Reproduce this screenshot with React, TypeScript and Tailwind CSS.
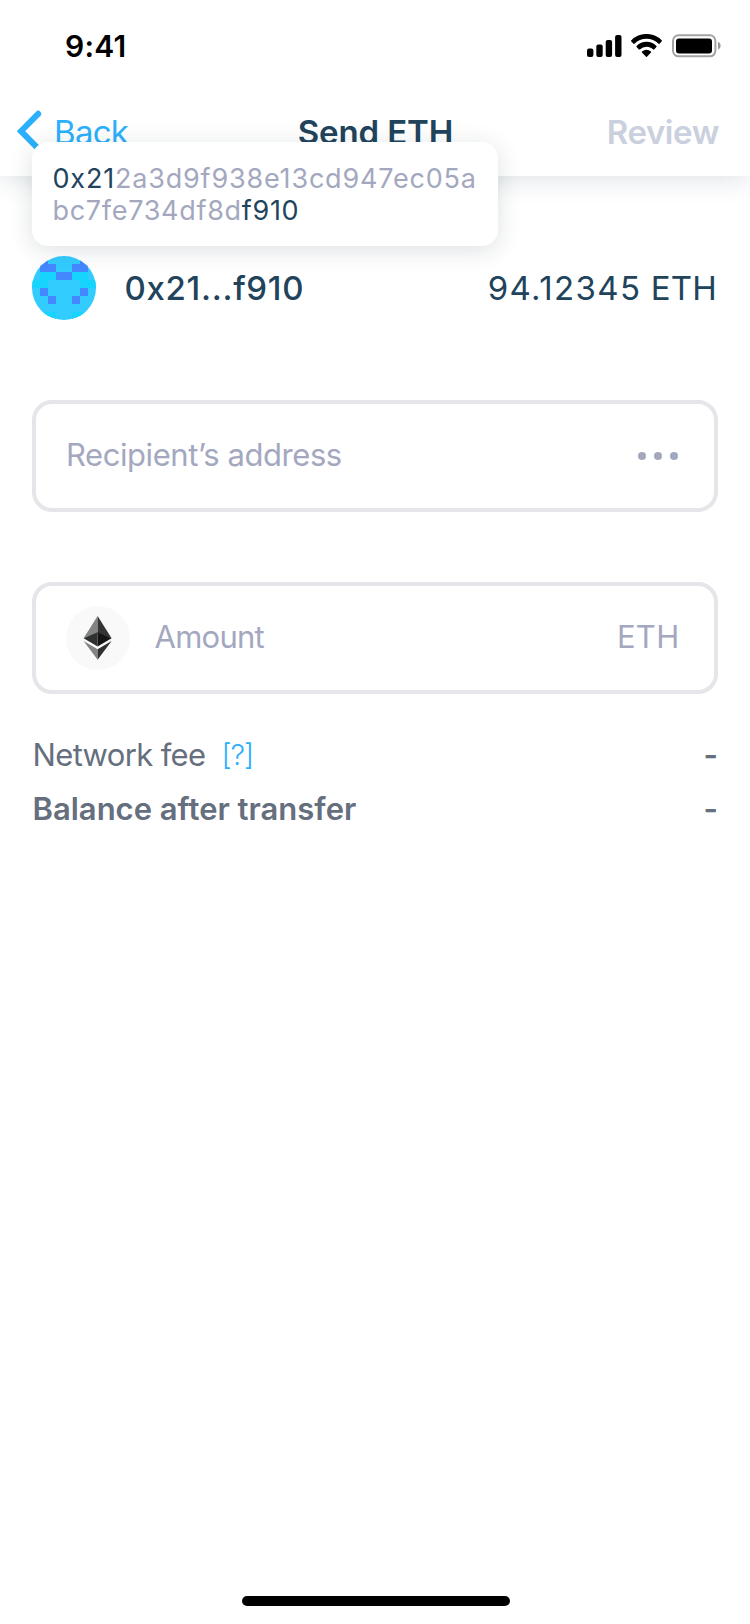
import type { ReactNode } from "react";

const AVATAR_ROWS = [
  ".b....b.",
  ".bb..bb.",
  ".ccbbcc.",
  "cc....cc",
  ".b....b.",
  "..b..b..",
  "........",
  "ccc..ccc",
];

function Avatar() {
  return (
    <svg className="size-16 rounded-full bg-[#33ccff]" viewBox="0 0 8 8" shapeRendering="crispEdges">
      {AVATAR_ROWS.flatMap((row, y) =>
        row.split("").map((cell, x) =>
          cell === "." ? null : (
            <rect key={`${x}-${y}`} x={x} y={y} width="1" height="1" fill={cell === "b" ? "#4488ff" : "#17d4ff"} />
          ),
        ),
      )}
    </svg>
  );
}

function StatusBar() {
  return (
    <div className="flex h-[88px] items-start justify-between pt-[26px] pr-[29px] pl-[65px]">
      <span className="text-[30px] leading-10 font-semibold tracking-[0.2px] text-black">9:41</span>
      <div className="flex pt-[8px]">
        <svg className="h-[24px] w-[35px]" viewBox="0 0 35 24">
          <rect x="0" y="14.6" width="6.4" height="8.4" rx="2" />
          <rect x="9.3" y="10.6" width="6.4" height="12.4" rx="2" />
          <rect x="18.7" y="6" width="6.4" height="17" rx="2" />
          <rect x="28.1" y="1" width="6.4" height="22" rx="2" />
        </svg>
        <svg className="ml-[9px] h-[23px] w-[31px]" viewBox="0 0 17.14 11.85" preserveAspectRatio="none">
          <path d="M8.57 2.47c2.49 0 4.88.92 6.68 2.57.14.13.36.13.49 0l1.3-1.26a.33.33 0 0 0 0-.49 12.5 12.5 0 0 0-16.95 0 .33.33 0 0 0 0 .49l1.3 1.26c.13.13.35.13.49 0a9.9 9.9 0 0 1 6.69-2.57z" />
          <path d="M8.57 6.56c1.37 0 2.68.49 3.7 1.38.14.13.35.13.49-.01l1.3-1.26a.33.33 0 0 0 0-.49 8.07 8.07 0 0 0-10.97 0 .33.33 0 0 0 0 .49l1.3 1.26c.13.13.35.14.49.01a5.6 5.6 0 0 1 3.69-1.38z" />
          <path d="M11.12 9.33a.33.33 0 0 1-.1.25l-2.22 2.17a.36.36 0 0 1-.5 0L6.07 9.58a.33.33 0 0 1 .01-.5 4.1 4.1 0 0 1 4.94 0c.06.06.1.15.1.25z" />
        </svg>
        <svg className="ml-[10px] h-[24px] w-[49px]" viewBox="0 0 49 24">
          <rect x="1" y="1.3" width="42.4" height="21" rx="5.5" fill="none" stroke="#000" strokeOpacity="0.36" strokeWidth="2" />
          <rect x="4" y="4.4" width="36" height="15" rx="3" />
          <path d="M46 7.8v8a4.3 4.3 0 0 0 0-8z" fillOpacity="0.4" />
        </svg>
      </div>
    </div>
  );
}

function Header() {
  return (
    <header className="bg-white shadow-[0_4px_24px_rgba(0,50,72,0.13)]">
      <StatusBar />
      <div className="grid h-[88px] grid-cols-[1fr_auto_1fr] items-center pr-[31px] pl-[13px] text-[33px] leading-10">
        <div className="flex items-center">
          <svg className="h-10 w-[30px] overflow-visible" viewBox="0 0 30 40" fill="none" stroke="#2bb0fd" strokeWidth="6" strokeLinecap="round">
            <path d="M25.2 1.8 8 19.2 25.2 36.6" strokeLinejoin="miter" />
          </svg>
          <span className="ml-[11px] tracking-[-0.7px] text-[#2bb0fd]">Back</span>
        </div>
        <h1 className="pl-[19px] font-semibold tracking-[-0.12px] text-[#21445c]">Send ETH</h1>
        <span className="text-right font-semibold tracking-[-0.4px] text-[#cad0de]">Review</span>
      </div>
    </header>
  );
}

function AddressTooltip() {
  return (
    <div className="absolute top-[142px] left-8 h-[104px] w-[466px] rounded-2xl bg-white pt-[21px] pl-[20.5px] text-[27px] leading-8 tracking-[0.81px] whitespace-nowrap text-[#a4a8bf] shadow-[0_4px_24px_rgba(0,34,51,0.14)]">
      <p>
        <span className="text-[#21445c]">0x21</span>2a3d9f938e13cd947ec05a
      </p>
      <p className="tracking-[0.7px]">
        bc7fe734df8d<span className="text-[#21445c]">f910</span>
      </p>
    </div>
  );
}

function Field({ className, children }: { className: string; children: ReactNode }) {
  return (
    <div className={`flex h-28 items-center rounded-[20px] border-4 border-[#e5e5ea] text-[31px] leading-10 text-[#a4a8bf] ${className}`}>
      {children}
    </div>
  );
}

function EthIcon() {
  return (
    <svg className="size-16 rounded-full bg-[#f9f9f9]" viewBox="0 0 64 64">
      <path d="M31.6 10v17L17.6 32.2z" fill="#828384" />
      <path d="M31.6 10v17l14 5.2z" fill="#343434" />
      <path d="M31.6 26.2v14.3l-14-8.3z" fill="#2f3030" />
      <path d="M31.6 26.2v14.3l14-8.3z" fill="#141414" />
      <path d="M17.6 35l14 8.2v10.6z" fill="#828384" />
      <path d="M45.6 35l-14 8.2v10.6z" fill="#2f3030" />
    </svg>
  );
}

export default function App() {
  return (
    <div className="relative flex h-[1624px] w-[750px] flex-col bg-white font-['Inter',sans-serif]">
      <Header />
      <AddressTooltip />
      <main className="flex flex-1 flex-col px-8 pt-20">
        <div className="flex items-center text-[33px] leading-10 text-[#21445c]">
          <Avatar />
          <span className="ml-[28.5px] font-medium tracking-[0.7px]">0x21...f910</span>
          <span className="mr-[1.2px] ml-auto tracking-[0.1px]">
            <span className="tracking-[1.4px]">94.12345</span> ETH
          </span>
        </div>

        <Field className="mt-20 justify-between pr-8 pl-[30px]">
          <span className="pb-[2px] tracking-[-0.43px]">Recipient’s address</span>
          <span className="flex gap-2 pr-1">
            <i className="size-2 rounded-full bg-[#a4a8bf]" />
            <i className="size-2 rounded-full bg-[#a4a8bf]" />
            <i className="size-2 rounded-full bg-[#a4a8bf]" />
          </span>
        </Field>

        <Field className="mt-[70px] pr-[34.5px] pl-[30px]">
          <EthIcon />
          <span className="ml-[24.5px] pb-[2px] tracking-[-0.75px]">Amount</span>
          <span className="ml-auto pb-[2px] tracking-[0.3px]">ETH</span>
        </Field>

        <div className="mt-[34px] pl-[0.5px] text-[31px] leading-[54px] text-[#656f7e]">
          <div className="flex">
            <span className="tracking-[-0.64px]">Network fee</span>
            <span className="ml-[16px] text-[29px] font-light tracking-[-1.1px] text-[#2bb0fd]">[?]</span>
            <span className="ml-auto font-semibold">-</span>
          </div>
          <div className="flex justify-between font-semibold">
            <span>Balance after transfer</span>
            <span>-</span>
          </div>
        </div>
      </main>
      <div className="mb-[18px] ml-[242px] h-[10px] w-[268px] rounded-full bg-black" />
    </div>
  );
}
